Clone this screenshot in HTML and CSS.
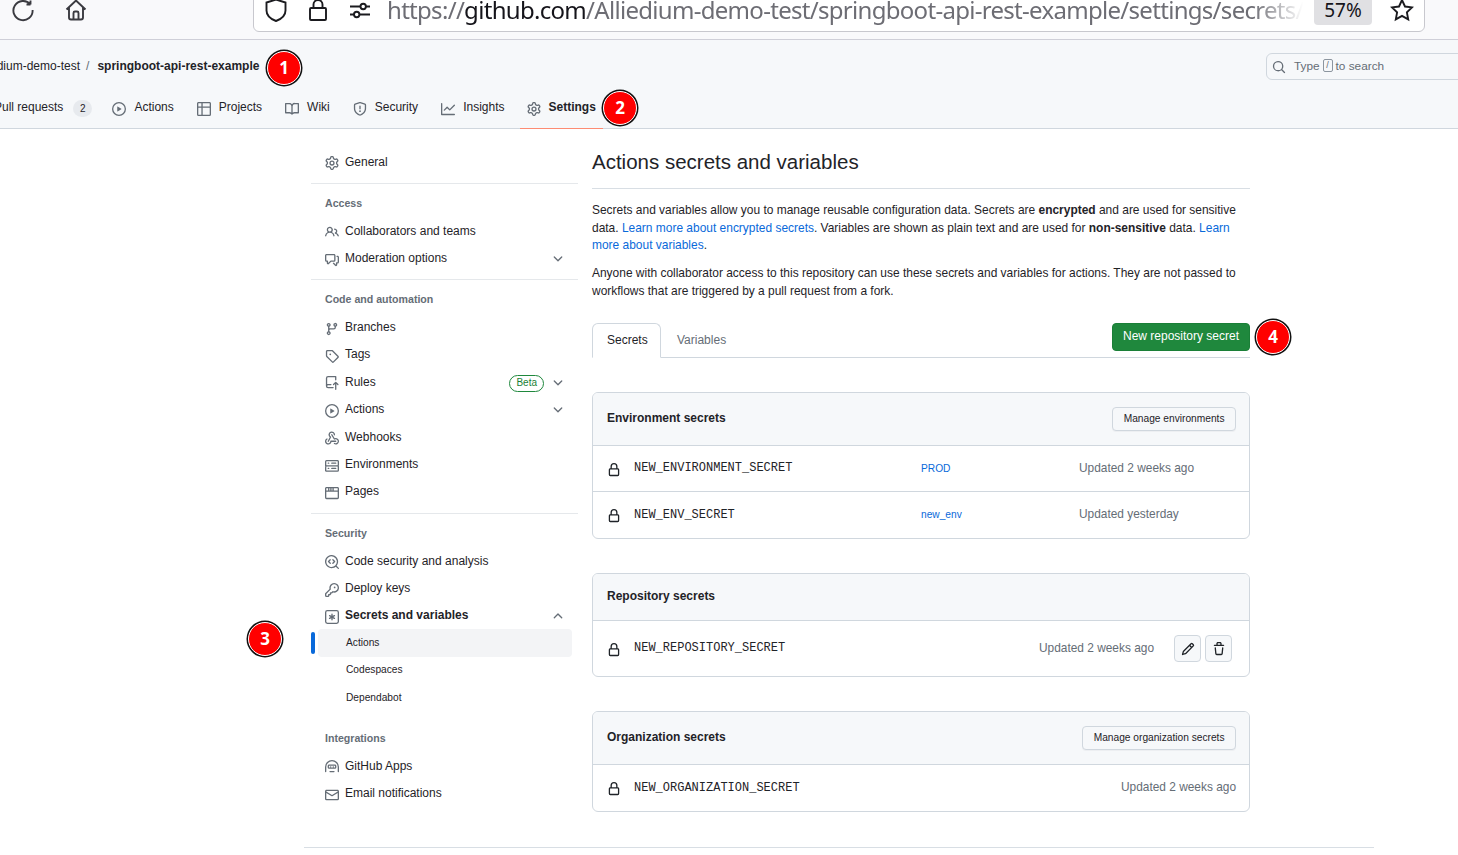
FILE: index.html
```html
<!DOCTYPE html>
<html lang="en">
  <head>
    <meta charset="UTF-8" />
    <meta name="viewport" content="width=device-width, initial-scale=1.0" />
    <title>Actions secrets and variables</title>
    <link rel="stylesheet" href="styles.css">
  </head>
  <body>
    <svg class="sprite" aria-hidden="true">
      <symbol id="i-gear" viewBox="0 0 16 16"><path d="M8 0a8.2 8.2 0 0 1 .701.031C9.444.095 9.99.645 10.16 1.29l.288 1.107c.018.066.079.158.212.224.231.114.454.243.668.386.123.082.233.09.299.071l1.103-.303c.644-.176 1.392.021 1.82.63.27.385.506.792.704 1.218.315.675.111 1.422-.364 1.891l-.814.806c-.049.048-.098.147-.088.294.016.257.016.515 0 .772-.01.147.038.246.088.294l.814.806c.475.469.679 1.216.364 1.891a7.977 7.977 0 0 1-.704 1.217c-.428.61-1.176.807-1.82.63l-1.102-.302c-.067-.019-.177-.011-.3.071a5.909 5.909 0 0 1-.668.386c-.133.066-.194.158-.211.224l-.29 1.106c-.168.646-.715 1.196-1.458 1.26a8.006 8.006 0 0 1-1.402 0c-.743-.064-1.289-.614-1.458-1.26l-.289-1.106c-.018-.066-.079-.158-.212-.224a5.738 5.738 0 0 1-.668-.386c-.123-.082-.233-.09-.299-.071l-1.103.303c-.644.176-1.392-.021-1.82-.63a8.12 8.12 0 0 1-.704-1.218c-.315-.675-.111-1.422.363-1.891l.815-.806c.05-.048.098-.147.088-.294a6.214 6.214 0 0 1 0-.772c.01-.147-.038-.246-.088-.294l-.815-.806C.635 6.045.431 5.298.746 4.623a7.92 7.92 0 0 1 .704-1.217c.428-.61 1.176-.807 1.82-.63l1.102.302c.067.019.177.011.3-.071.214-.143.437-.272.668-.386.133-.066.194-.158.211-.224l.29-1.106C6.009.645 6.556.095 7.299.03 7.53.01 7.764 0 8 0Zm-.571 1.525c-.036.003-.108.036-.137.146l-.289 1.105c-.147.561-.549.967-.998 1.189-.173.086-.34.183-.5.29-.417.278-.97.423-1.529.27l-1.103-.303c-.109-.03-.175.016-.195.045-.22.312-.412.644-.573.99-.014.031-.021.11.059.19l.815.806c.411.406.562.957.53 1.456a4.709 4.709 0 0 0 0 .582c.032.499-.119 1.05-.53 1.456l-.815.806c-.081.08-.073.159-.059.19.162.346.353.677.573.989.02.03.085.076.195.046l1.102-.303c.56-.153 1.113-.008 1.53.27.161.107.328.204.501.29.447.222.85.629.997 1.189l.289 1.105c.029.109.101.143.137.146a6.6 6.6 0 0 0 1.142 0c.036-.003.108-.036.137-.146l.289-1.105c.147-.561.549-.967.998-1.189.173-.086.34-.183.5-.29.417-.278.97-.423 1.529-.27l1.103.303c.109.029.175-.016.195-.045.22-.313.411-.644.573-.99.014-.031.021-.11-.059-.19l-.815-.806c-.411-.406-.562-.957-.53-1.456a4.709 4.709 0 0 0 0-.582c-.032-.499.119-1.05.53-1.456l.815-.806c.081-.08.073-.159.059-.19a6.464 6.464 0 0 0-.573-.989c-.02-.03-.085-.076-.195-.046l-1.102.303c-.56.153-1.113.008-1.53-.27a4.44 4.44 0 0 0-.501-.29c-.447-.222-.85-.629-.997-1.189l-.289-1.105c-.029-.11-.101-.143-.137-.146a6.6 6.6 0 0 0-1.142 0ZM11 8a3 3 0 1 1-6 0 3 3 0 0 1 6 0ZM9.5 8a1.5 1.5 0 1 0-3.001.001A1.5 1.5 0 0 0 9.5 8Z"/></symbol>
      <symbol id="i-play" viewBox="0 0 16 16"><path d="M8 0a8 8 0 1 1 0 16A8 8 0 0 1 8 0ZM1.5 8a6.5 6.5 0 1 0 13 0 6.5 6.5 0 0 0-13 0Zm4.879-2.773 4.264 2.559a.25.25 0 0 1 0 .428l-4.264 2.559A.25.25 0 0 1 6 10.559V5.442a.25.25 0 0 1 .379-.215Z"/></symbol>
      <symbol id="i-table" viewBox="0 0 16 16"><path d="M0 1.75C0 .784.784 0 1.75 0h12.5C15.216 0 16 .784 16 1.75v12.5A1.75 1.75 0 0 1 14.25 16H1.75A1.75 1.75 0 0 1 0 14.25ZM6.5 6.5v8h7.75a.25.25 0 0 0 .25-.25V6.5Zm8-1.5V1.75a.25.25 0 0 0-.25-.25H6.5V5Zm-13 1.5v7.75c0 .138.112.25.25.25H5v-8ZM5 5V1.5H1.75a.25.25 0 0 0-.25.25V5Z"/></symbol>
      <symbol id="i-book" viewBox="0 0 16 16"><path d="M0 1.75A.75.75 0 0 1 .75 1h4.253c1.227 0 2.317.59 3 1.501A3.743 3.743 0 0 1 11.006 1h4.245a.75.75 0 0 1 .75.75v10.5a.75.75 0 0 1-.75.75h-4.507a2.25 2.25 0 0 0-1.591.659l-.622.621a.75.75 0 0 1-1.06 0l-.622-.621A2.25 2.25 0 0 0 5.258 13H.75a.75.75 0 0 1-.75-.75Zm7.251 10.324.004-5.073-.002-2.253A2.25 2.25 0 0 0 5.003 2.5H1.5v9h3.757a3.75 3.75 0 0 1 1.994.574ZM8.755 4.75l-.004 7.322a3.752 3.752 0 0 1 1.992-.572H14.5v-9h-3.495a2.25 2.25 0 0 0-2.25 2.25Z"/></symbol>
      <symbol id="i-shield" viewBox="0 0 16 16"><path d="M7.467.133a1.748 1.748 0 0 1 1.066 0l5.25 1.68A1.75 1.75 0 0 1 15 3.48V7c0 1.566-.32 3.182-1.303 4.682-.983 1.498-2.585 2.813-5.032 3.855a1.697 1.697 0 0 1-1.33 0c-2.447-1.042-4.049-2.357-5.032-3.855C1.32 10.182 1 8.566 1 7V3.48a1.75 1.75 0 0 1 1.217-1.667Zm.61 1.429a.25.25 0 0 0-.153 0l-5.25 1.68a.25.25 0 0 0-.174.238V7c0 1.358.275 2.666 1.057 3.86.784 1.194 2.121 2.34 4.366 3.297a.196.196 0 0 0 .154 0c2.245-.956 3.582-2.104 4.366-3.298C13.225 9.666 13.5 8.36 13.5 7V3.48a.251.251 0 0 0-.174-.237l-5.25-1.68ZM8.75 4.75v3a.75.75 0 0 1-1.5 0v-3a.75.75 0 0 1 1.5 0ZM9 10.5a1 1 0 1 1-2 0 1 1 0 0 1 2 0Z"/></symbol>
      <symbol id="i-graph" viewBox="0 0 16 16"><path d="M1.5 1.75V13.5h13.75a.75.75 0 0 1 0 1.5H.75a.75.75 0 0 1-.75-.75V1.75a.75.75 0 0 1 1.5 0Zm14.28 2.53-5.25 5.25a.75.75 0 0 1-1.06 0L7 7.06 4.28 9.78a.751.751 0 0 1-1.042-.018.751.751 0 0 1-.018-1.042l3.25-3.25a.75.75 0 0 1 1.06 0L10 7.94l4.72-4.72a.751.751 0 0 1 1.042.018.751.751 0 0 1 .018 1.042Z"/></symbol>
      <symbol id="i-people" viewBox="0 0 16 16"><path d="M2 5.5a3.5 3.5 0 1 1 5.898 2.549 5.508 5.508 0 0 1 3.034 4.084.75.75 0 1 1-1.482.235 4 4 0 0 0-7.9 0 .75.75 0 0 1-1.482-.236A5.507 5.507 0 0 1 3.102 8.05 3.493 3.493 0 0 1 2 5.5ZM11 4a3.001 3.001 0 0 1 2.22 5.018 5.01 5.01 0 0 1 2.56 3.012.749.749 0 0 1-.885.954.752.752 0 0 1-.549-.514 3.507 3.507 0 0 0-2.522-2.372.75.75 0 0 1-.574-.73v-.352a.75.75 0 0 1 .416-.672A1.5 1.5 0 0 0 11 5.5.75.75 0 0 1 11 4Zm-5.5-.5a2 2 0 1 0-.001 3.999A2 2 0 0 0 5.5 3.5Z"/></symbol>
      <symbol id="i-comment" viewBox="0 0 16 16"><path d="M1.75 1h8.5c.966 0 1.75.784 1.75 1.75v5.5A1.75 1.75 0 0 1 10.25 10H7.061l-2.574 2.573A1.458 1.458 0 0 1 2 11.543V10h-.25A1.75 1.75 0 0 1 0 8.25v-5.5C0 1.784.784 1 1.75 1ZM1.5 2.75v5.5c0 .138.112.25.25.25h1a.75.75 0 0 1 .75.75v2.19l2.72-2.72a.749.749 0 0 1 .53-.22h3.5a.25.25 0 0 0 .25-.25v-5.5a.25.25 0 0 0-.25-.25h-8.5a.25.25 0 0 0-.25.25Zm13 2a.25.25 0 0 0-.25-.25h-.5a.75.75 0 0 1 0-1.5h.5c.966 0 1.75.784 1.75 1.75v5.5A1.75 1.75 0 0 1 14.25 12H14v1.543a1.458 1.458 0 0 1-2.487 1.03L9.22 12.28a.749.749 0 0 1 .326-1.275.749.749 0 0 1 .734.215l2.22 2.22v-2.19a.75.75 0 0 1 .75-.75h1a.25.25 0 0 0 .25-.25Z"/></symbol>
      <symbol id="i-branch" viewBox="0 0 16 16"><path d="M9.5 3.25a2.25 2.25 0 1 1 3 2.122V6A2.5 2.5 0 0 1 10 8.5H6a1 1 0 0 0-1 1v1.128a2.251 2.251 0 1 1-1.5 0V5.372a2.25 2.25 0 1 1 1.5 0v1.836A2.493 2.493 0 0 1 6 7h4a1 1 0 0 0 1-1v-.628A2.25 2.25 0 0 1 9.5 3.25Zm-6 0a.75.75 0 1 0 1.5 0 .75.75 0 0 0-1.5 0Zm8.25-.75a.75.75 0 1 0 0 1.5.75.75 0 0 0 0-1.5ZM4.25 12a.75.75 0 1 0 0 1.5.75.75 0 0 0 0-1.5Z"/></symbol>
      <symbol id="i-tag" viewBox="0 0 16 16"><path d="M1 7.775V2.75C1 1.784 1.784 1 2.75 1h5.025c.464 0 .91.184 1.238.513l6.25 6.25a1.75 1.75 0 0 1 0 2.474l-5.026 5.026a1.75 1.75 0 0 1-2.474 0l-6.25-6.25A1.75 1.75 0 0 1 1 7.775Zm1.5 0c0 .066.026.13.073.177l6.25 6.25a.25.25 0 0 0 .354 0l5.025-5.025a.25.25 0 0 0 0-.354l-6.25-6.25a.25.25 0 0 0-.177-.073H2.75a.25.25 0 0 0-.25.25ZM6 5a1 1 0 1 1 0 2 1 1 0 0 1 0-2Z"/></symbol>
      <symbol id="i-rules" viewBox="0 0 16 16"><path d="M1 2.5A2.5 2.5 0 0 1 3.5 0h8.75a.75.75 0 0 1 .75.75v3.5a.75.75 0 0 1-1.5 0V1.5h-8a1 1 0 0 0-1 1v6.708A2.486 2.486 0 0 1 3.5 9h3.25a.75.75 0 0 1 0 1.5H3.5a1 1 0 0 0 0 2h5.75a.75.75 0 0 1 0 1.5H3.5A2.5 2.5 0 0 1 1 11.5Zm13.23 7.79h-.001l-1.224-1.224v6.184a.75.75 0 0 1-1.5 0V9.066L10.28 10.29a.75.75 0 0 1-1.06-1.061l2.505-2.504a.75.75 0 0 1 1.06 0L15.29 9.23a.751.751 0 0 1-.018 1.042.751.751 0 0 1-1.042.018Z"/></symbol>
      <symbol id="i-webhook" viewBox="0 0 16 16"><path d="M5.5 4.25a2.25 2.25 0 0 1 4.5 0 .75.75 0 0 0 1.5 0 3.75 3.75 0 1 0-6.14 2.889l-2.272 4.258a.75.75 0 0 0 1.324.706L7 7.25a.75.75 0 0 0-.309-1.015A2.25 2.25 0 0 1 5.5 4.25Z"/><path d="M7.364 3.607a.75.75 0 0 1 1.03.257l2.608 4.349a3.75 3.75 0 1 1-.628 6.785.75.75 0 0 1 .752-1.299 2.25 2.25 0 1 0-.033-3.88.75.75 0 0 1-1.03-.256L7.107 4.636a.75.75 0 0 1 .257-1.03Z"/><path d="M2.9 8.776A.75.75 0 0 1 2.625 9.8 2.25 2.25 0 1 0 6 11.75a.75.75 0 0 1 .75-.751h5.5a.75.75 0 0 1 0 1.5H7.425a3.751 3.751 0 1 1-5.55-3.998.75.75 0 0 1 1.024.274Z"/></symbol>
      <symbol id="i-server" viewBox="0 0 16 16"><path d="M1.75 1h12.5c.966 0 1.75.784 1.75 1.75v4c0 .372-.116.717-.314 1 .198.283.314.628.314 1v4a1.75 1.75 0 0 1-1.75 1.75H1.75A1.75 1.75 0 0 1 0 13.75v-4c0-.372.116-.717.314-1a1.739 1.739 0 0 1-.314-1v-4C0 1.784.784 1 1.75 1ZM1.5 2.75v4c0 .138.112.25.25.25h12.5a.25.25 0 0 0 .25-.25v-4a.25.25 0 0 0-.25-.25H1.75a.25.25 0 0 0-.25.25Zm.25 5.75a.25.25 0 0 0-.25.25v4c0 .138.112.25.25.25h12.5a.25.25 0 0 0 .25-.25v-4a.25.25 0 0 0-.25-.25ZM7 4.75A.75.75 0 0 1 7.75 4h4.5a.75.75 0 0 1 0 1.5h-4.5A.75.75 0 0 1 7 4.75ZM7.75 10h4.5a.75.75 0 0 1 0 1.5h-4.5a.75.75 0 0 1 0-1.5ZM3 4.75A.75.75 0 0 1 3.75 4h.5a.75.75 0 0 1 0 1.5h-.5A.75.75 0 0 1 3 4.75ZM3.75 10h.5a.75.75 0 0 1 0 1.5h-.5a.75.75 0 0 1 0-1.5Z"/></symbol>
      <symbol id="i-browser" viewBox="0 0 16 16"><path d="M0 2.75C0 1.784.784 1 1.75 1h12.5c.966 0 1.75.784 1.75 1.75v10.5A1.75 1.75 0 0 1 14.25 15H1.75A1.75 1.75 0 0 1 0 13.25ZM14.5 6.5h-13v6.75c0 .138.112.25.25.25h12.5a.25.25 0 0 0 .25-.25ZM8.5 2.5h-1V5h1Zm-2.5 0H5V5h1Zm-2.5 0H1.75a.25.25 0 0 0-.25.25V5h2ZM14.5 2.75a.25.25 0 0 0-.25-.25H10V5h4.5Z"/></symbol>
      <symbol id="i-codescan" viewBox="0 0 16 16"><path d="M8.47 4.97a.75.75 0 0 0 0 1.06L9.94 7.5 8.47 8.97a.75.75 0 1 0 1.06 1.06l2-2a.75.75 0 0 0 0-1.06l-2-2a.75.75 0 0 0-1.06 0ZM6.53 6.03a.75.75 0 0 0-1.06-1.06l-2 2a.75.75 0 0 0 0 1.06l2 2a.75.75 0 1 0 1.06-1.06L5.06 7.5l1.47-1.47Z"/><path d="M12.246 13.307a7.501 7.501 0 1 1 1.06-1.06l2.474 2.473a.749.749 0 0 1-.326 1.275.749.749 0 0 1-.734-.215ZM1.5 7.5a6.002 6.002 0 0 0 3.608 5.504 6.002 6.002 0 0 0 6.486-1.117.748.748 0 0 1 .292-.293A6 6 0 1 0 1.5 7.5Z"/></symbol>
      <symbol id="i-key" viewBox="0 0 16 16"><path d="M10.5 0a5.499 5.499 0 1 1-1.288 10.848l-.932.932a.749.749 0 0 1-.53.22H7v.75a.749.749 0 0 1-.22.53l-.5.5a.749.749 0 0 1-.53.22H5v.75a.749.749 0 0 1-.22.53l-.5.5a.749.749 0 0 1-.53.22h-2A1.75 1.75 0 0 1 0 14.25v-2c0-.199.079-.389.22-.53l4.932-4.932A5.5 5.5 0 0 1 10.5 0Zm-4 5.5c-.001.431.069.86.205 1.269a.75.75 0 0 1-.181.768L1.5 12.56v1.69c0 .138.112.25.25.25h1.69l.06-.06v-1.19a.75.75 0 0 1 .75-.75h1.19l.06-.06v-1.19a.75.75 0 0 1 .75-.75h1.19l1.023-1.025a.75.75 0 0 1 .768-.18A4 4 0 1 0 6.5 5.5ZM11 6a1 1 0 1 1 0-2 1 1 0 0 1 0 2Z"/></symbol>
      <symbol id="i-asterisk" viewBox="0 0 16 16"><path d="M0 2.75A2.75 2.75 0 0 1 2.75 0h10.5A2.75 2.75 0 0 1 16 2.75v10.5A2.75 2.75 0 0 1 13.25 16H2.75A2.75 2.75 0 0 1 0 13.25ZM2.75 1.5c-.69 0-1.25.56-1.25 1.25v10.5c0 .69.56 1.25 1.25 1.25h10.5c.69 0 1.25-.56 1.25-1.25V2.75c0-.69-.56-1.25-1.25-1.25Z"/><path d="M8 4a.75.75 0 0 1 .75.75V6.7l1.69-.975a.75.75 0 0 1 .75 1.3L9.5 8l1.69.976a.75.75 0 0 1-.75 1.298L8.75 9.3v1.951a.75.75 0 0 1-1.5 0V9.3l-1.69.975a.751.751 0 0 1-1.025-.274.75.75 0 0 1 .275-1.025L6.5 8l-1.69-.976a.75.75 0 0 1 .75-1.298l1.69.975V4.75A.75.75 0 0 1 8 4Z"/></symbol>
      <symbol id="i-hubot" viewBox="0 0 16 16"><path d="M0 8a8 8 0 0 1 16 0v5.25a.75.75 0 0 1-1.5 0V8a6.5 6.5 0 1 0-13 0v5.25a.75.75 0 0 1-1.5 0Zm3-1.25C3 5.784 3.784 5 4.75 5h6.5c.966 0 1.75.784 1.75 1.75v1.5A1.75 1.75 0 0 1 11.25 10h-6.5A1.75 1.75 0 0 1 3 8.25Zm1.75-.25a.25.25 0 0 0-.25.25v1.5c0 .138.112.25.25.25h6.5a.25.25 0 0 0 .25-.25v-1.5a.25.25 0 0 0-.25-.25ZM6.5 7a.75.75 0 0 1 .75.75.75.75 0 0 1-1.5 0A.75.75 0 0 1 6.5 7Zm3 0a.75.75 0 0 1 .75.75.75.75 0 0 1-1.5 0A.75.75 0 0 1 9.5 7ZM5.75 12.5h4.5a.75.75 0 0 1 0 1.5h-4.5a.75.75 0 0 1 0-1.5Z"/></symbol>
      <symbol id="i-mail" viewBox="0 0 16 16"><path d="M1.75 2h12.5c.966 0 1.75.784 1.75 1.75v8.5A1.75 1.75 0 0 1 14.25 14H1.75A1.75 1.75 0 0 1 0 12.25v-8.5C0 2.784.784 2 1.75 2ZM1.5 12.251c0 .138.112.25.25.25h12.5a.25.25 0 0 0 .25-.25V5.809L8.38 9.397a.75.75 0 0 1-.76 0L1.5 5.809v6.442Zm13-8.181v-.32a.25.25 0 0 0-.25-.25H1.75a.25.25 0 0 0-.25.25v.32L8 7.88Z"/></symbol>
      <symbol id="i-down" viewBox="0 0 16 16"><path d="M12.78 5.22a.749.749 0 0 1 0 1.06l-4.25 4.25a.749.749 0 0 1-1.06 0L3.22 6.28a.749.749 0 1 1 1.06-1.06L8 8.939l3.72-3.719a.749.749 0 0 1 1.06 0Z"/></symbol>
      <symbol id="i-up" viewBox="0 0 16 16"><path d="M3.22 10.53a.749.749 0 0 1 0-1.06l4.25-4.25a.749.749 0 0 1 1.06 0l4.25 4.25a.749.749 0 1 1-1.06 1.06L8 6.811 4.28 10.53a.749.749 0 0 1-1.06 0Z"/></symbol>
      <symbol id="i-lock" viewBox="0 0 16 16"><path d="M4 4a4 4 0 0 1 8 0v2h.25c.966 0 1.75.784 1.75 1.75v5.5A1.75 1.75 0 0 1 12.25 15h-8.5A1.75 1.75 0 0 1 2 13.25v-5.5C2 6.784 2.784 6 3.75 6H4Zm8.25 3.5h-8.5a.25.25 0 0 0-.25.25v5.5c0 .138.112.25.25.25h8.5a.25.25 0 0 0 .25-.25v-5.5a.25.25 0 0 0-.25-.25ZM10.5 6V4a2.5 2.5 0 1 0-5 0v2Z"/></symbol>
      <symbol id="i-pencil" viewBox="0 0 16 16"><path d="M11.013 1.427a1.75 1.75 0 0 1 2.474 0l1.086 1.086a1.75 1.75 0 0 1 0 2.474l-8.61 8.61c-.21.21-.47.364-.756.445l-3.251.93a.75.75 0 0 1-.927-.928l.929-3.25c.081-.286.235-.547.445-.758l8.61-8.61Zm.176 4.823L9.75 4.81l-6.286 6.287a.253.253 0 0 0-.064.108l-.558 1.953 1.953-.558a.253.253 0 0 0 .108-.064Zm1.238-3.763a.25.25 0 0 0-.354 0L10.811 3.75l1.439 1.44 1.263-1.263a.25.25 0 0 0 0-.354Z"/></symbol>
      <symbol id="i-trash" viewBox="0 0 16 16"><path d="M11 1.75V3h2.25a.75.75 0 0 1 0 1.5H2.75a.75.75 0 0 1 0-1.5H5V1.75C5 .784 5.784 0 6.75 0h2.5C10.216 0 11 .784 11 1.75ZM4.496 6.675l.66 6.6a.25.25 0 0 0 .249.225h5.19a.25.25 0 0 0 .249-.225l.66-6.6a.75.75 0 0 1 1.492.149l-.66 6.6A1.748 1.748 0 0 1 10.595 15h-5.19a1.75 1.75 0 0 1-1.741-1.575l-.66-6.6a.75.75 0 1 1 1.492-.15ZM6.5 1.75V3h3V1.75a.25.25 0 0 0-.25-.25h-2.5a.25.25 0 0 0-.25.25Z"/></symbol>
      <symbol id="i-search" viewBox="0 0 16 16"><path d="M10.68 11.74a6 6 0 0 1-7.922-8.982 6 6 0 0 1 8.982 7.922l3.04 3.04a.749.749 0 0 1-.326 1.275.749.749 0 0 1-.734-.215ZM11.5 7a4.499 4.499 0 1 0-8.997 0A4.499 4.499 0 0 0 11.5 7Z"/></symbol>
    </svg>

    <!-- browser chrome, cut off at the top of the shot -->
    <div class="toolbar">
      <div class="tool-btns">
        <svg class="tool-icon" viewBox="0 0 24 24"><path d="M19.5 6.5V2.5M19.5 6.5h-4M19.3 6.3A9.6 9.6 0 1 0 21.6 12"/></svg>
        <svg class="tool-icon" viewBox="0 0 24 24"><path d="M2.5 11.5 12 2.5l9.5 9M5 9.5v10a2 2 0 0 0 2 2h10a2 2 0 0 0 2-2v-10M9.5 21.500v-6.500a1.500 1.500 0 0 1 1.500-1.500h2a1.500 1.500 0 0 1 1.500 1.500v6.500"/></svg>
      </div>
      <div class="urlbar">
        <svg class="url-icon" viewBox="0 0 24 24"><path d="M12 1.500 21.500 4.500v8c0 5-4 8.500-9.500 10.500-5.500-2-9.500-5.500-9.500-10.500v-8Z"/></svg>
        <svg class="url-icon" viewBox="0 0 24 24"><path d="M7.500 10V6.500a4.500 4.500 0 0 1 9 0V10M5 10h14a1 1 0 0 1 1 1v10a1 1 0 0 1-1 1H5a1 1 0 0 1-1-1V11a1 1 0 0 1 1-1Z"/></svg>
        <svg class="url-icon" viewBox="0 0 24 24"><path d="M2 8.500h10.500M18 8.500h4M2 16.500h4M11.500 16.500H22"/><circle cx="15.200" cy="8.500" r="2.700"/><circle cx="8.700" cy="16.500" r="2.700"/></svg>
        <div class="url"><span class="url-dim">https://</span>github.com<span class="url-dim">/Alliedium-demo-test/springboot-api-rest-example/settings/secrets/</span></div>
        <span class="zoom-level">57%</span>
        <svg class="url-icon star" viewBox="0 0 24 24"><path d="m12 2 3 6.500 7 .900-5.100 4.900 1.300 7L12 17.800l-6.200 3.500 1.300-7L2 9.400l7-.900Z"/></svg>
      </div>
    </div>

    <header class="repo-head">
      <div class="head-top">
        <div class="crumbs">
          <a class="org">Alliedium-demo-test</a>
          <span class="slash">/</span>
          <strong>springboot-api-rest-example</strong>
        </div>
        <div class="search">
          <svg class="icon"><use href="#i-search"/></svg>
          <span>Type</span><kbd>/</kbd><span>to search</span>
        </div>
      </div>
      <nav class="repo-tabs">
        <a class="repo-tab first">Pull requests <span class="count">2</span></a>
        <a class="repo-tab"><svg class="icon"><use href="#i-play"/></svg>Actions</a>
        <a class="repo-tab"><svg class="icon"><use href="#i-table"/></svg>Projects</a>
        <a class="repo-tab"><svg class="icon"><use href="#i-book"/></svg>Wiki</a>
        <a class="repo-tab"><svg class="icon"><use href="#i-shield"/></svg>Security</a>
        <a class="repo-tab"><svg class="icon"><use href="#i-graph"/></svg>Insights</a>
        <a class="repo-tab selected"><svg class="icon"><use href="#i-gear"/></svg>Settings</a>
      </nav>
    </header>

    <div class="layout">
      <aside class="sidebar">
        <div class="side-group">
          <a class="side-item"><svg class="icon"><use href="#i-gear"/></svg>General</a>
        </div>
        <div class="side-group">
          <h2 class="side-title">Access</h2>
          <a class="side-item"><svg class="icon"><use href="#i-people"/></svg>Collaborators and teams</a>
          <a class="side-item"><svg class="icon"><use href="#i-comment"/></svg>Moderation options<svg class="chev"><use href="#i-down"/></svg></a>
        </div>
        <div class="side-group automation">
          <h2 class="side-title">Code and automation</h2>
          <a class="side-item"><svg class="icon"><use href="#i-branch"/></svg>Branches</a>
          <a class="side-item"><svg class="icon"><use href="#i-tag"/></svg>Tags</a>
          <a class="side-item"><svg class="icon"><use href="#i-rules"/></svg>Rules<span class="beta">Beta</span><svg class="chev after-beta"><use href="#i-down"/></svg></a>
          <a class="side-item"><svg class="icon"><use href="#i-play"/></svg>Actions<svg class="chev"><use href="#i-down"/></svg></a>
          <a class="side-item"><svg class="icon"><use href="#i-webhook"/></svg>Webhooks</a>
          <a class="side-item"><svg class="icon"><use href="#i-server"/></svg>Environments</a>
          <a class="side-item"><svg class="icon"><use href="#i-browser"/></svg>Pages</a>
        </div>
        <div class="side-group no-rule">
          <h2 class="side-title">Security</h2>
          <a class="side-item"><svg class="icon"><use href="#i-codescan"/></svg>Code security and analysis</a>
          <a class="side-item"><svg class="icon"><use href="#i-key"/></svg>Deploy keys</a>
          <a class="side-item open"><svg class="icon"><use href="#i-asterisk"/></svg>Secrets and variables<svg class="chev"><use href="#i-up"/></svg></a>
          <a class="side-sub current">Actions</a>
          <a class="side-sub">Codespaces</a>
          <a class="side-sub">Dependabot</a>
        </div>
        <div class="side-group no-rule">
          <h2 class="side-title">Integrations</h2>
          <a class="side-item"><svg class="icon"><use href="#i-hubot"/></svg>GitHub Apps</a>
          <a class="side-item"><svg class="icon"><use href="#i-mail"/></svg>Email notifications</a>
        </div>
      </aside>

      <main class="content">
        <h1 class="page-title">Actions secrets and variables</h1>
        <p class="intro">Secrets and variables allow you to manage reusable configuration data. Secrets are <b>encrypted</b> and are used for sensitive data. <a>Learn more about encrypted secrets</a>. Variables are shown as plain text and are used for <b>non-sensitive</b> data. <a>Learn more about variables</a>.</p>
        <p class="intro">Anyone with collaborator access to this repository can use these secrets and variables for actions. They are not passed to workflows that are triggered by a pull request from a fork.</p>

        <div class="tabs">
          <a class="tab active">Secrets</a>
          <a class="tab">Variables</a>
          <button class="btn-primary">New repository secret</button>
        </div>

        <section class="box">
          <div class="box-head env-head">
            <h3>Environment secrets</h3>
            <button class="btn">Manage environments</button>
          </div>
          <div class="box-row short">
            <svg class="icon lock"><use href="#i-lock"/></svg>
            <code>NEW_ENVIRONMENT_SECRET</code>
            <a class="scope">PROD</a>
            <span class="updated col">Updated 2 weeks ago</span>
          </div>
          <div class="box-row">
            <svg class="icon lock"><use href="#i-lock"/></svg>
            <code>NEW_ENV_SECRET</code>
            <a class="scope">new_env</a>
            <span class="updated col">Updated yesterday</span>
          </div>
        </section>

        <section class="box repo-box">
          <div class="box-head repo-head-row">
            <h3>Repository secrets</h3>
          </div>
          <div class="box-row tall">
            <svg class="icon lock"><use href="#i-lock"/></svg>
            <code>NEW_REPOSITORY_SECRET</code>
            <span class="updated">Updated 2 weeks ago</span>
            <span class="row-btns">
              <button class="btn-icon"><svg class="icon dark"><use href="#i-pencil"/></svg></button>
              <button class="btn-icon"><svg class="icon dark"><use href="#i-trash"/></svg></button>
            </span>
          </div>
        </section>

        <section class="box">
          <div class="box-head env-head">
            <h3>Organization secrets</h3>
            <button class="btn">Manage organization secrets</button>
          </div>
          <div class="box-row">
            <svg class="icon lock"><use href="#i-lock"/></svg>
            <code>NEW_ORGANIZATION_SECRET</code>
            <span class="updated">Updated 2 weeks ago</span>
          </div>
        </section>
      </main>
    </div>
    <div class="foot-rule"></div>

    <span class="marker m1">1</span>
    <span class="marker m2">2</span>
    <span class="marker m3">3</span>
    <span class="marker m4">4</span>
  </body>
</html>
```

FILE: styles.css
```css
* {
  box-sizing: border-box;
}

html,
body {
  height: 855px;
  overflow: hidden;
}

body {
  margin: 0;
  position: relative;
  background: #fff;
  color: #1f2328;
  font-family: "Liberation Sans", Arial, sans-serif;
  font-size: 12px;
  line-height: 18px;
}

.sprite {
  display: none;
}

.icon {
  width: 14px;
  height: 14px;
  flex: none;
  fill: #656d76;
}

.icon.dark {
  fill: #1f2328;
}

/* browser toolbar */
.toolbar {
  height: 40px;
  display: flex;
  align-items: flex-end;
  padding: 0 33px 7px 0;
  background: #f9f9fb;
  border-bottom: 1px solid #cfcfd8;
  overflow: hidden;
}

.tool-btns {
  width: 253px;
  height: 44px;
  flex: none;
  display: flex;
  align-items: center;
  gap: 29px;
  padding-left: 11px;
}

.tool-icon,
.url-icon {
  width: 24px;
  height: 24px;
  flex: none;
  fill: none;
  stroke: #1b1b1f;
  stroke-width: 1.9;
}

.tool-icon {
  stroke: #3a3a40;
}

.urlbar {
  flex: 1;
  min-width: 0;
  height: 44px;
  display: flex;
  align-items: center;
  padding: 0 10px;
  background: #fff;
  border: 1px solid #c8c8ce;
  border-radius: 0 0 6px 6px;
}

.url-icon + .url-icon {
  margin-left: 18px;
}

.url {
  flex: 1;
  min-width: 0;
  margin-left: 15px;
  overflow: hidden;
  white-space: nowrap;
  font-family: "Noto Sans", sans-serif;
  font-size: 24px;
  letter-spacing: -0.7px;
  line-height: 44px;
  color: #15141a;
  -webkit-mask-image: linear-gradient(to left, transparent 0, #000 50px);
  mask-image: linear-gradient(to left, transparent 0, #000 50px);
}

.url-dim {
  color: #6d6d74;
}

.zoom-level {
  width: 58px;
  height: 36px;
  margin: 0 18px 0 11px;
  padding-top: 10px;
  flex: none;
  align-self: flex-start;
  text-align: center;
  background: #e0e0e3;
  border-radius: 4px;
  font-family: "Noto Sans", sans-serif;
  font-size: 19px;
  line-height: 22px;
  color: #15141a;
}

.url-icon.star {
  margin-left: 0;
}

/* repo header */
.repo-head {
  height: 89px;
  background: #f6f8fa;
  border-bottom: 1px solid #d0d7de;
}

.head-top {
  height: 47px;
  display: flex;
  align-items: center;
  justify-content: space-between;
  padding-top: 5px;
}

.crumbs {
  display: flex;
  gap: 6px;
  margin-left: -26px;
}

.crumbs strong {
  margin-left: 2px;
}

.slash {
  color: #656d76;
}

.search {
  width: 250px;
  height: 27px;
  margin-top: 1px;
  margin-right: -58px;
  flex: none;
  display: flex;
  align-items: center;
  gap: 3px;
  padding: 0 0 2px 5px;
  border: 1px solid #d0d7de;
  border-radius: 6px;
  color: #656d76;
  font-size: 11.800px;
}

.search .icon {
  margin: 3px 5px 0 0;
}

kbd {
  width: 10px;
  height: 13px;
  display: inline-block;
  font: 9px/11px "Liberation Sans", sans-serif;
  text-align: center;
  border: 1px solid #8c959f;
  border-radius: 2px;
}

.repo-tabs {
  height: 42px;
  display: flex;
  gap: 9px;
  margin-left: -13px;
}

.repo-tab {
  height: 42px;
  display: flex;
  align-items: center;
  gap: 8px;
  padding: 0 7px 2px;
  white-space: nowrap;
}

.repo-tab.first {
  padding-right: 4px;
}

.repo-tab .icon {
  margin-top: 4px;
}

.count {
  width: 19px;
  height: 17px;
  margin-left: 2px;
  margin-top: 2px;
  border-radius: 9px;
  background: #e7eaee;
  font-size: 10px;
  line-height: 17px;
  text-align: center;
}

.repo-tab.selected {
  font-weight: 700;
  gap: 7px;
  box-shadow: inset 0 -1px 0 #fd8c73;
}

/* sidebar + content */
.layout {
  display: flex;
  height: 718px;
  padding-left: 311px;
}

.sidebar {
  width: 267px;
  flex: none;
  padding-top: 19px;
}

.side-group {
  padding-bottom: 7.300px;
  border-bottom: 1px solid #e5e8eb;
}

.side-group.automation {
  padding-bottom: 7.600px;
}

.side-group.no-rule {
  border-bottom: 0;
  padding-bottom: 7.600px;
}

.side-title {
  height: 33.300px;
  margin: 0;
  padding: 10px 0 0 14px;
  font-size: 10.600px;
  font-weight: 700;
  line-height: 18px;
  color: #656d76;
}

.side-item {
  height: 27.400px;
  margin: 0 6px 0 7px;
  padding: 0 7px;
  display: flex;
  align-items: center;
  gap: 6px;
}

.side-item .icon {
  margin-top: 3px;
}

.side-item.open {
  font-weight: 700;
}

.chev {
  width: 14px;
  height: 14px;
  margin-left: auto;
  margin-top: 2px;
  fill: #656d76;
}

.chev.after-beta {
  margin-left: 1px;
}

.beta {
  height: 17px;
  margin-left: auto;
  margin-top: 3px;
  padding: 0 6px;
  border: 1px solid #1f883d;
  border-radius: 9px;
  color: #1a7f37;
  font-size: 10px;
  line-height: 14px;
}

.side-sub {
  height: 27.400px;
  margin: 0 6px 0 7px;
  padding-left: 28px;
  display: flex;
  align-items: center;
  font-size: 10.200px;
  position: relative;
}

.side-sub.current {
  background: #f3f4f6;
  border-radius: 4px;
}

/* active marker sits in the gutter left of the item */
.side-sub.current::before {
  content: "";
  position: absolute;
  left: -7px;
  top: 3px;
  bottom: 3px;
  width: 4px;
  border-radius: 4px;
  background: #0969da;
}

.content {
  width: 658px;
  margin-left: 14px;
  padding-top: 17px;
}

.page-title {
  margin: 0 0 12.800px;
  padding-bottom: 11px;
  font-size: 20.500px;
  font-weight: 400;
  line-height: 31px;
  border-bottom: 1px solid #d8dee4;
  white-space: nowrap;
}

.intro {
  margin: 0 0 10.200px;
  font-size: 11.960px;
  line-height: 17.700px;
}

.intro a {
  color: #0969da;
}

.tabs {
  height: 35px;
  margin-top: 22.600px;
  display: flex;
  align-items: flex-start;
  border-bottom: 1px solid #d0d7de;
}

.tab {
  height: 35px;
  padding: 7px 14px;
  color: #656d76;
  border: 1px solid transparent;
  border-radius: 6px 6px 0 0;
}

.tab.active {
  width: 69px;
  margin-right: 1px;
  background: #fff;
  color: #1f2328;
  border-color: #d0d7de;
  border-bottom-color: #fff;
}

.btn-primary {
  width: 138px;
  height: 28px;
  margin-left: auto;
  padding: 0 0 2px;
  background: #1f883d;
  color: #fff;
  border: 1px solid #1a7f37;
  border-radius: 4px;
  font: 12px/18px "Liberation Sans", sans-serif;
}

.box {
  margin-top: 34px;
  border: 1px solid #d0d7de;
  border-radius: 6px;
  overflow: hidden;
}

.box-head {
  display: flex;
  align-items: center;
  justify-content: space-between;
  padding: 0 13px 0 14px;
  background: #f6f8fa;
  border-bottom: 1px solid #d0d7de;
}

.env-head {
  height: 53px;
}

.repo-head-row {
  height: 47px;
}

.box-head h3 {
  margin: 0 0 2px;
  font-size: 12px;
  font-weight: 700;
}

.btn {
  height: 24px;
  padding: 0 10.500px;
  background: #f6f8fa;
  color: #1f2328;
  border: 1px solid #d0d7de;
  border-radius: 4px;
  box-shadow: 0 1px 0 rgba(31, 35, 40, 0.04);
  font: 10.200px/18px "Liberation Sans", sans-serif;
}

.box-row {
  height: 46px;
  display: flex;
  align-items: center;
  padding: 0 13px 0 14px;
}

.box-row.short {
  height: 45px;
}

.box-row + .box-row {
  height: 47px;
  border-top: 1px solid #d0d7de;
}

.box-row.tall {
  height: 55px;
  padding-right: 17px;
}

.lock {
  margin-top: 2px;
  fill: #1f2328;
}

code {
  flex: 1;
  margin-left: 13px;
  margin-bottom: 1px;
  font-family: "Liberation Mono", monospace;
  font-size: 12px;
}

.scope {
  width: 158px;
  color: #0969da;
  font-size: 10.200px;
}

.updated {
  margin-bottom: 2px;
  color: #656d76;
  font-size: 11.900px;
}

.updated.col {
  width: 157px;
}

.row-btns {
  display: flex;
  gap: 4px;
  margin-left: 20px;
}

.btn-icon {
  width: 27px;
  height: 27px;
  padding: 0;
  display: flex;
  align-items: center;
  justify-content: center;
  background: #f6f8fa;
  border: 1px solid #d0d7de;
  border-radius: 4px;
}

.foot-rule {
  width: 1070px;
  margin-left: 304px;
  border-top: 1px solid #d8dee4;
}

/* numbered call-outs drawn over the screenshot */
.marker {
  position: absolute;
  width: 34px;
  height: 34px;
  background: #f00;
  border: 1px solid #fff;
  border-radius: 50%;
  box-shadow: 0 0 0 1.500px #111;
  color: #fff;
  font-family: "Open Sans", sans-serif;
  font-size: 17px;
  font-weight: 700;
  line-height: 32px;
  text-align: center;
}

.m1 { left: 267px; top: 51px; }
.m2 { left: 603px; top: 91px; }
.m3 { left: 248px; top: 622px; }
.m4 { left: 1256px; top: 320px; }
```
